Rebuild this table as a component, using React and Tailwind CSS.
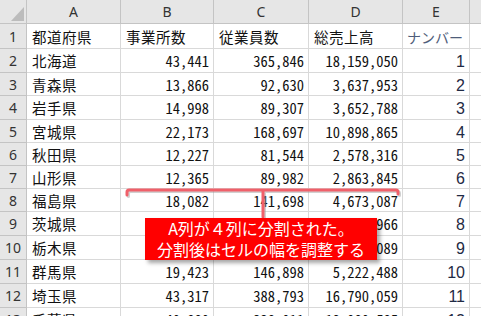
import React from "react";

const cols = ["A", "B", "C", "D", "E", ""];

/* row height of each data row (px) */
const heights = [25, 24, 23, 24, 23, 23, 23, 23, 24, 24, 24, 24, 24];

const rows = [
  ["都道府県", "事業所数", "従業員数", "総売上高", "ナンバー"],
  ["北海道", "43,441", "365,846", "18,159,050", "1"],
  ["青森県", "13,866", "92,630", "3,637,953", "2"],
  ["岩手県", "14,998", "89,307", "3,652,788", "3"],
  ["宮城県", "22,173", "168,697", "10,898,865", "4"],
  ["秋田県", "12,227", "81,544", "2,578,316", "5"],
  ["山形県", "12,365", "89,982", "2,863,845", "6"],
  ["福島県", "18,082", "141,698", "4,673,087", "7"],
  ["茨城県", "27,353", "237,213", "7,826,966", "8"],
  ["栃木県", "19,651", "155,120", "5,563,089", "9"],
  ["群馬県", "19,423", "146,898", "5,222,488", "10"],
  ["埼玉県", "43,317", "388,793", "16,790,059", "11"],
  ["千葉県", "40,880", "338,011", "12,980,585", "12"],
];

const jp = "font-['MS_Gothic','Noto_Sans_CJK_JP',sans-serif]";

function Cell({ children, idx, row }) {
  const base =
    "flex items-center border-r border-b border-[#d9d9d9] overflow-hidden whitespace-nowrap text-[14.5px] leading-none";
  if (idx === 0) {
    return (
      <div className={`${base} ${jp} pl-[5px] pt-[2px] text-[#111] tracking-[0.5px]`}>
        {children}
      </div>
    );
  }
  if (idx === 4) {
    if (row === 0) {
      return (
        <div className={`${base} ${jp} pl-[4px] pt-[2px] text-[#4f5d7a] text-[14px]`}>
          {children}
        </div>
      );
    }
    return (
      <div className={`${base} justify-end pr-[4px] pt-[3px] font-['Liberation_Sans',sans-serif] text-[16px] text-[#1f2a44]`}>
        {children}
      </div>
    );
  }
  if (row === 0) {
    return (
      <div className={`${base} ${jp} pl-[5px] pt-[2px] text-[#111] tracking-[0.5px]`}>
        {children}
      </div>
    );
  }
  return (
    <div
      className={`${base} ${jp} justify-end pr-[4px] pt-[2px] text-[#111] [font-feature-settings:'hwid']`}
    >
      {children}
    </div>
  );
}

export default function App() {
  return (
    <div className="relative w-[481px] h-[316px] overflow-hidden bg-white">
      <div
        className="grid grid-cols-[27px_94px_93px_95px_94px_67px_40px]"
        style={{
          gridTemplateRows: `24px ${heights.map((h) => h + "px").join(" ")}`,
        }}
      >
        {/* corner */}
        <div className="relative bg-[#e6e6e6] border-r border-b border-[#c4c4c4]">
          <div className="absolute right-[2px] bottom-[2px] w-0 h-0 border-l-[13px] border-l-transparent border-b-[14px] border-b-[#bcbcbc]" />
        </div>

        {/* column letters */}
        {cols.map((c, i) => (
          <div
            key={i}
            className="flex items-center justify-center bg-[#e6e6e6] border-r border-b border-[#c4c4c4] font-['Noto_Sans',sans-serif] text-[14px] text-[#333]"
          >
            {c}
          </div>
        ))}

        {rows.map((r, ri) => (
          <React.Fragment key={ri}>
            <div className="flex items-center justify-center bg-[#e6e6e6] border-r border-b border-[#c4c4c4] font-['Noto_Sans',sans-serif] text-[14px] text-[#333]">
              {ri + 1}
            </div>
            {r.map((v, ci) => (
              <Cell key={ci} idx={ci} row={ri}>
                {v}
              </Cell>
            ))}
            <div className="border-r border-b border-[#d9d9d9]" />
          </React.Fragment>
        ))}
      </div>

      {/* bracket */}
      <svg
        className="absolute left-0 top-0"
        width="481"
        height="316"
        viewBox="0 0 481 316"
      >
        <g fill="none" strokeWidth="3" strokeLinecap="round" strokeLinejoin="round">
          <path
            d="M127 195 L127 192 Q127 190 129 190 L396 190 Q398 190 398 192 L398 194 M263 190 L263 217"
            stroke="#9a9a9a"
            opacity="0.45"
            transform="translate(1.5 1.5)"
          />
          <path
            d="M127 195 L127 192 Q127 190 129 190 L396 190 Q398 190 398 192 L398 194 M263 190 L263 217"
            stroke="#f0606a"
          />
        </g>
      </svg>

      {/* callout */}
      <div className="absolute left-[145px] top-[218px] w-[232px] h-[42px] bg-[#ff0000] shadow-[3px_3px_4px_rgba(0,0,0,0.35)] flex flex-col items-center justify-center font-['Noto_Sans_CJK_JP',sans-serif] text-[16px] leading-[21px] text-white">
        <span>A列が４列に分割された。</span>
        <span>分割後はセルの幅を調整する</span>
      </div>
    </div>
  );
}
